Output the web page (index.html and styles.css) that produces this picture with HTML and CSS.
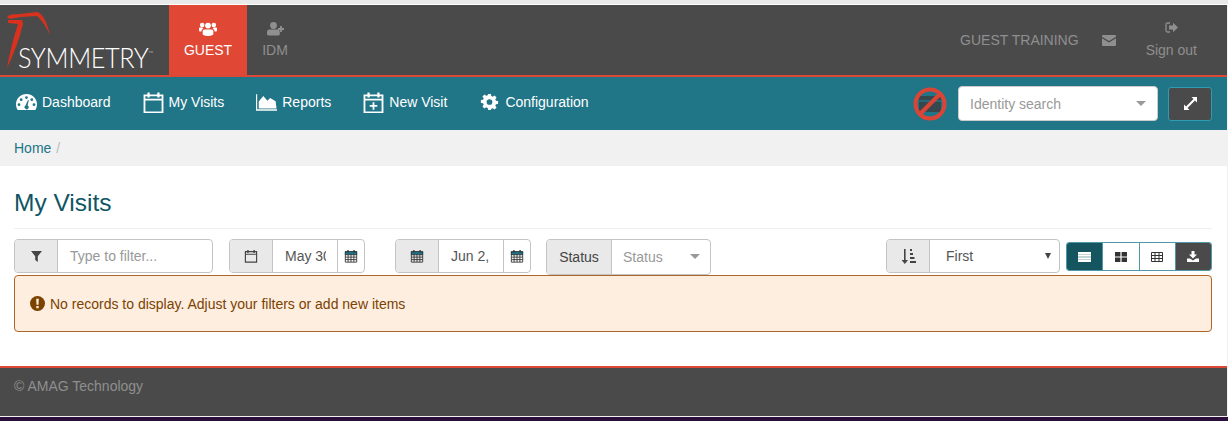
FILE: index.html
```html
<!DOCTYPE html>
<html lang="en">
<head>
    <meta charset="UTF-8">
    <title>My Visits</title>
    <link rel="stylesheet" href="styles.css">
</head>
<body>
    <svg class="defs" width="0" height="0">
        <defs>
            <g id="cal">
                <path fill="none" stroke="currentColor" stroke-width="1.3" d="M1.600 3h12.800v12H1.600zM1.600 6h12.800"/>
                <path fill="none" stroke="currentColor" stroke-width="1.600" d="M4.500 1v3.500M11.500 1v3.500"/>
            </g>
            <g id="calgrid">
                <path fill="#1d7488" d="M1 2.500h14v4H1z"/>
                <path fill="none" stroke="#333" stroke-width="1" d="M1.500 3h13v12h-13zM1.500 6.500h13M1.500 9.300h13M1.500 12.100h13M4.700 6.500V15M8 6.500V15M11.300 6.500V15"/>
                <path fill="none" stroke="#333" stroke-width="1.500" d="M4.500 1v3M11.500 1v3"/>
            </g>
        </defs>
    </svg>

    <header class="topbar">
        <a class="logo">
            <svg class="logo-mark" viewBox="0 0 52 64" width="52" height="64">
                <path fill="#d8321f" d="M7 12Q8 9 20 9L37 7Q45 9 50 30 44 17 37 11L21 12 10 14Z"/>
                <path fill="#d8321f" d="M8 15H22L23 19Q18 40 7 63 11 40 18 19L8 18Z"/>
            </svg>
            <span class="logo-text">SYMMETRY<sup>™</sup></span>
        </a>
        <a class="app-tab active">
            <svg width="18" height="14" viewBox="0 0 18 14"><circle cx="9" cy="3.600" r="2.900" fill="currentColor"/><circle cx="3.200" cy="3" r="2.300" fill="currentColor"/><circle cx="14.800" cy="3" r="2.300" fill="currentColor"/><path fill="currentColor" d="M5 7.500h8q1.300 0 1.300 1.500v3.500q-2 1.500-5.300 1.500T3.700 12.500V9Q3.700 7.500 5 7.500zM0 6.500q0-1 1-1h2.800q.6 1-.6 2-.8.7-.8 2H1q-1 0-1-1zM18 6.500q0-1-1-1h-2.800q-.6 1 .6 2 .8.7.8 2H17q1 0 1-1z"/></svg>
            <span>GUEST</span>
        </a>
        <a class="app-tab idm">
            <svg width="17" height="14" viewBox="0 0 17 14"><circle cx="6.500" cy="3.500" r="3.400" fill="currentColor"/><path fill="currentColor" d="M2 7.500h9q1.800 0 1.800 2.500V12q0 1.600-1.800 1.600H2Q0 13.600 0 12v-2q0-2.500 2-2.500z"/><path stroke="currentColor" stroke-width="1.800" d="M14 4v6M11 7h6"/></svg>
            <span>IDM</span>
        </a>
        <div class="user-area">
            <span class="user-name">GUEST TRAINING</span>
            <svg class="mail" width="14" height="11" viewBox="0 0 14 11"><path fill="currentColor" d="M1 0h12q1 0 1 1v.8L7 6 0 1.800V1q0-1 1-1zM0 3.300 7 7.500l7-4.200V10q0 1-1 1H1q-1 0-1-1z"/></svg>
            <a class="sign-out">
                <svg width="13" height="11" viewBox="0 0 13 11"><path fill="none" stroke="currentColor" stroke-width="1.300" d="M5 1H2.500Q1 1 1 2.500v6Q1 10 2.500 10H5"/><path fill="currentColor" d="M4 3.500h4V.8l5 4.700-5 4.700V7.500H4z"/></svg>
                <span>Sign out</span>
            </a>
        </div>
    </header>

    <nav class="mainnav">
        <a class="nav-item">
            <svg width="21" height="16" viewBox="0 0 21 16"><path fill="currentColor" fill-rule="evenodd" d="M10.500 0C4.700 0 0 4.600 0 10.300c0 1.900.5 3.700 1.400 5.200q.2.500.8.500h16.600q.6 0 .8-.5c.9-1.500 1.400-3.300 1.400-5.200C21 4.600 16.300 0 10.500 0zM10.500 2.200a1.400 1.400 0 1 1 0 2.800 1.400 1.400 0 0 1 0-2.800zM5.200 4.300a1.400 1.400 0 1 1 0 2.800 1.400 1.400 0 0 1 0-2.800zM3 9.300a1.400 1.400 0 1 1 0 2.800 1.400 1.400 0 0 1 0-2.800zM18 9.300a1.400 1.400 0 1 1 0 2.800 1.400 1.400 0 0 1 0-2.800zM15.800 4.300a1.400 1.400 0 1 1 0 2.800 1.400 1.400 0 0 1 0-2.800zM12 6l.8.300-1.200 5.200a2 2 0 1 1-2.100.1z"/></svg>
            <span>Dashboard</span>
        </a>
        <a class="nav-item">
            <svg width="21" height="21" viewBox="0.800 0.600 14.400 14.900"><use href="#cal"/></svg>
            <span>My Visits</span>
        </a>
        <a class="nav-item">
            <svg width="21" height="17" viewBox="0 0 23 18"><path fill="currentColor" d="M0 0h1.300v16.500H23V18H0z"/><path fill="currentColor" d="M3 15.500V8l5-6 4.500 5 3-3 6 3.500 1 8z"/></svg>
            <span>Reports</span>
        </a>
        <a class="nav-item">
            <svg width="21" height="21" viewBox="0.800 0.600 14.400 14.900"><use href="#cal"/><path stroke="currentColor" stroke-width="1.300" d="M8 7.800v5.400M5.300 10.500h5.400"/></svg>
            <span>New Visit</span>
        </a>
        <a class="nav-item">
            <svg width="21" height="18" viewBox="-2.500 -.5 22 18"><path fill="currentColor" fill-rule="evenodd" d="M7 0h3l.4 2.300 1.500.6L13.800 1.600 15.900 3.700l-1.300 1.900.6 1.500L17.500 7.500v3l-2.300.4-.6 1.500 1.300 1.900-2.100 2.100-1.900-1.300-1.500.6L10 17H7l-.4-2.300-1.500-.6-1.900 1.300L1.100 13.300l1.300-1.900-.6-1.500L-.5 9.500v-3l2.300-.4.6-1.500L1.100 2.700 3.200.6l1.900 1.300 1.500-.6zM8.500 5.500a3 3 0 1 0 0 6 3 3 0 0 0 0-6z"/></svg>
            <span>Configuration</span>
        </a>
        <div class="nav-right">
            <svg width="34" height="34" viewBox="0 0 34 34">
                <rect x="6" y="9" width="22" height="16" rx="1" fill="#37474e"/>
                <path stroke="#1f7687" stroke-width="1.500" d="M6 14h22"/>
                <circle cx="17" cy="17" r="14.500" fill="none" stroke="#dc4436" stroke-width="4"/>
                <path stroke="#dc4436" stroke-width="4" d="M7 27 27 7"/>
            </svg>
            <div class="identity-search">
                <span>Identity search</span>
                <i class="caret"></i>
            </div>
            <button class="expand-btn">
                <svg width="13" height="13" viewBox="0 0 13 13"><path fill="#fff" d="M7.500 0H13v5.500l-2-2L3.500 11l2 2H0V7.500l2 2L9.500 2z"/></svg>
            </button>
        </div>
    </nav>

    <div class="breadcrumb"><a>Home</a><span class="sep">/</span></div>

    <main class="content">
        <h1>My Visits</h1>
        <div class="toolbar">
            <div class="group group-filter">
                <span class="addon">
                    <svg width="11" height="11" viewBox="0 0 11 11"><path fill="#444" d="M0 0h11L6.800 5.200V11L4.200 9V5.200z"/></svg>
                </span>
                <span class="field placeholder">Type to filter...</span>
            </div>
            <div class="group group-date">
                <span class="addon"><svg width="14" height="14" viewBox="0 0 16 16"><use href="#cal"/></svg></span>
                <span class="field date"><span class="date-value">May 30, 2017</span></span>
                <span class="addon-plain"><svg width="14" height="14" viewBox="0 0 16 16"><use href="#calgrid"/></svg></span>
            </div>
            <div class="group group-date second">
                <span class="addon"><svg width="14" height="14" viewBox="0 0 16 16"><use href="#calgrid"/></svg></span>
                <span class="field date"><span class="date-value">Jun 2, 2017</span></span>
                <span class="addon-plain"><svg width="14" height="14" viewBox="0 0 16 16"><use href="#calgrid"/></svg></span>
            </div>
            <div class="group group-status">
                <span class="addon">Status</span>
                <span class="field placeholder">Status<i class="caret"></i></span>
            </div>
            <div class="group group-sort">
                <span class="addon">
                    <svg width="15" height="15" viewBox="0 0 15 15"><path fill="#444" d="M3 0h1.600v11H7l-3.200 4L.6 11H3zM9 0h2v2H9zM9 4h3v2H9zM9 8h4.500v2H9zM9 12h6v2H9z"/></svg>
                </span>
                <span class="field sort-value">First<i class="mini-caret"></i></span>
            </div>
            <div class="view-buttons">
                <button class="view-btn current">
                    <svg width="13" height="10" viewBox="0 0 13 10"><path fill="#fff" d="M0 0h13v2.200H0zM0 2.600h13v2.200H0zM0 5.200h13v2.200H0zM0 7.800h13V10H0z"/></svg>
                </button>
                <button class="view-btn">
                    <svg width="12" height="10" viewBox="0 0 12 10"><path fill="#333" d="M0 0h5.400v4.400H0zM6.600 0H12v4.400H6.600zM0 5.600h5.400V10H0zM6.600 5.600H12V10H6.600z"/></svg>
                </button>
                <button class="view-btn">
                    <svg width="12" height="10" viewBox="0 0 12 10"><path fill="none" stroke="#333" d="M.5.500h11v9H.5zM.5 3.500h11M.5 6.500h11M4 .5v9M8 .5v9"/></svg>
                </button>
                <button class="view-btn download">
                    <svg width="12" height="11" viewBox="0 0 12 11"><path fill="#fff" d="M4.500 0h3v3.500H10L6 7.500 2 3.500h2.500zM0 7.500h3l3 2 3-2h3V11H0z"/></svg>
                </button>
            </div>
        </div>
        <div class="alert">
            <svg width="15" height="15" viewBox="0 0 15 15"><circle cx="7.500" cy="7.500" r="7.500" fill="#7b4200"/><path fill="#fdeee0" d="M6.200 2.800h2.600l-.3 6H6.500zM6.300 10h2.400v2.300H6.300z"/></svg>
            <span>No records to display. Adjust your filters or add new items</span>
        </div>
    </main>

    <footer class="footer">© AMAG Technology</footer>
    <div class="desktop"></div>
</body>
</html>
```

FILE: styles.css
```css
* {
    box-sizing: border-box;
}
html, body {
    height: 100%;
}
body {
    margin: 0;
    overflow: hidden;
    background: #f1f1f1;
    font-family: "Liberation Sans", Arial, sans-serif;
    font-size: 14px;
    color: #333;
    padding: 0 1px 0 0;
}
body::before {
    content: "";
    display: block;
    height: 4px;
    margin-right: -1px;
    border-bottom: 1px solid #fff;
    background: #e9e9e9;
    box-sizing: content-box;
}
.defs {
    position: absolute;
}

/* top bar */
.topbar {
    display: flex;
    height: 72px;
    background: #4a4a4a;
    border-bottom: 2px solid #dd4736;
}
.logo {
    width: 169px;
    position: relative;
    color: #fff;
}
.logo-mark {
    position: absolute;
    left: 0;
    top: 0;
}
.logo-text {
    position: absolute;
    left: 18px;
    top: 39px;
    font-family: Lato, "Liberation Sans", sans-serif;
    font-size: 27.500px;
    font-weight: 300;
    letter-spacing: -.4px;
    color: #fff;
    line-height: 28px;
    white-space: nowrap;
    transform: scaleX(.92);
    transform-origin: left center;
}
.logo-text sup {
    font-size: 7px;
    position: relative;
    top: -12px;
    vertical-align: baseline;
    color: #ccc;
}
.app-tab {
    width: 78px;
    height: 70px;
    padding-top: 17px;
    display: flex;
    flex-direction: column;
    align-items: center;
    gap: 6px;
    color: #8f8f8f;
    line-height: 16px;
}
.app-tab.idm {
    width: 56px;
}
.app-tab.active {
    background: #e04835;
    color: #fff;
}
.user-area {
    margin-left: auto;
    display: flex;
    align-items: center;
    color: #8f8f8f;
    padding-right: 30px;
}
.user-name {
    margin-top: -1px;
    margin-left: -1px;
}
.mail {
    margin-left: 23px;
    margin-top: 1px;
}
.sign-out {
    margin-left: 30px;
    margin-top: -1px;
    display: flex;
    flex-direction: column;
    align-items: center;
    gap: 9px;
    line-height: 16px;
}

/* main nav */
.mainnav {
    display: flex;
    align-items: center;
    height: 53px;
    padding: 0 15px 0 16px;
    background: #207587;
    color: #fff;
    gap: 32px;
}
.nav-item {
    display: flex;
    align-items: center;
    gap: 5px;
    margin-top: -3px;
}
.nav-right {
    margin-left: auto;
    display: flex;
    align-items: center;
    gap: 10px;
}
.identity-search {
    width: 200px;
    height: 35px;
    margin-left: 1px;
    padding: 0 11px;
    display: flex;
    align-items: center;
    justify-content: space-between;
    background: #fff;
    border: 1px solid #ccc;
    border-radius: 4px;
    color: #999;
}
.caret {
    width: 0;
    height: 0;
    border-left: 5px solid transparent;
    border-right: 5px solid transparent;
    border-top: 5px solid #999;
}
.expand-btn {
    width: 44px;
    height: 34px;
    display: flex;
    align-items: center;
    justify-content: center;
    padding: 0;
    background: #4a4a4a;
    border: 1px solid #2f9cb3;
    border-radius: 3px;
}

/* breadcrumb */
.breadcrumb {
    height: 36px;
    padding: 0 14px;
    display: flex;
    align-items: center;
    background: #f1f1f1;
    color: #207587;
}
.sep {
    margin-left: 5px;
    color: #bbb;
}

/* content */
.content {
    height: 200px;
    padding: 0 15px 0 14px;
    background: #fff;
}
.content h1 {
    margin: 0;
    height: 63px;
    padding-top: 23px;
    font-size: 24.500px;
    font-weight: 400;
    line-height: 28px;
    color: #0f5563;
    border-bottom: 1px solid #eee;
}
.toolbar {
    display: flex;
    align-items: flex-start;
    margin-top: 10px;
    height: 36px;
}
.group {
    display: flex;
    height: 34px;
    border: 1px solid #c4c4c4;
    border-radius: 4px;
    overflow: hidden;
    background: #fff;
}
.addon {
    width: 43px;
    flex: none;
    display: flex;
    align-items: center;
    justify-content: center;
    background: #e9e9e9;
    border-right: 1px solid #c4c4c4;
    color: #444;
}
.addon-plain {
    width: 27px;
    flex: none;
    display: flex;
    align-items: center;
    justify-content: center;
    border-left: 1px solid #c4c4c4;
}
.field {
    flex: 1;
    min-width: 0;
    display: flex;
    align-items: center;
    overflow: hidden;
    white-space: nowrap;
    color: #555;
}
.placeholder {
    color: #999;
}
.group-filter {
    width: 199px;
}
.group-filter .field {
    padding-left: 12px;
}
.group-date {
    width: 136px;
    margin-left: 16px;
}
.group-date.second {
    margin-left: 30px;
}
.group-date .field {
    padding-left: 12px;
}
.date-value {
    display: block;
    width: 41px;
    overflow: hidden;
}
.group-status {
    width: 165px;
    height: 36px;
    margin-left: 15px;
}
.group-status .addon {
    width: 65px;
    padding-bottom: 1px;
}
.group-status .field {
    padding: 0 10px 1px 11px;
    justify-content: space-between;
}
.group-sort {
    width: 174px;
    margin-left: auto;
}
.group-sort .field {
    padding: 0 8px 0 16px;
    justify-content: space-between;
}
.mini-caret {
    width: 0;
    height: 0;
    border-left: 3.500px solid transparent;
    border-right: 3.500px solid transparent;
    border-top: 6px solid #444;
}
.view-buttons {
    display: flex;
    width: 146px;
    height: 29px;
    margin: 3px 0 0 6px;
    border: 1px solid #4f98a8;
    border-radius: 3px;
    overflow: hidden;
}
.view-btn {
    flex: 1;
    padding: 0;
    display: flex;
    align-items: center;
    justify-content: center;
    background: #fff;
    border: 0;
    border-right: 1px solid #4f98a8;
}
.view-btn:last-child {
    border-right: 0;
}
.view-btn.current {
    background: #14555f;
}
.view-btn.download {
    background: #4a4a4a;
}
.alert {
    height: 57px;
    padding: 0 15px;
    display: flex;
    align-items: center;
    gap: 5px;
    background: #fdeee0;
    border: 1px solid #b0662a;
    border-radius: 4px;
    color: #7b4200;
}

/* footer */
.footer {
    height: 50px;
    padding: 10px 14px 0;
    line-height: 16px;
    background: #4a4a4a;
    border-top: 2px solid #dd4736;
    color: #8f8f8f;
}
.desktop {
    height: 4px;
    margin-top: 1px;
    margin-right: -1px;
    background: #2b0f3a;
}
```
